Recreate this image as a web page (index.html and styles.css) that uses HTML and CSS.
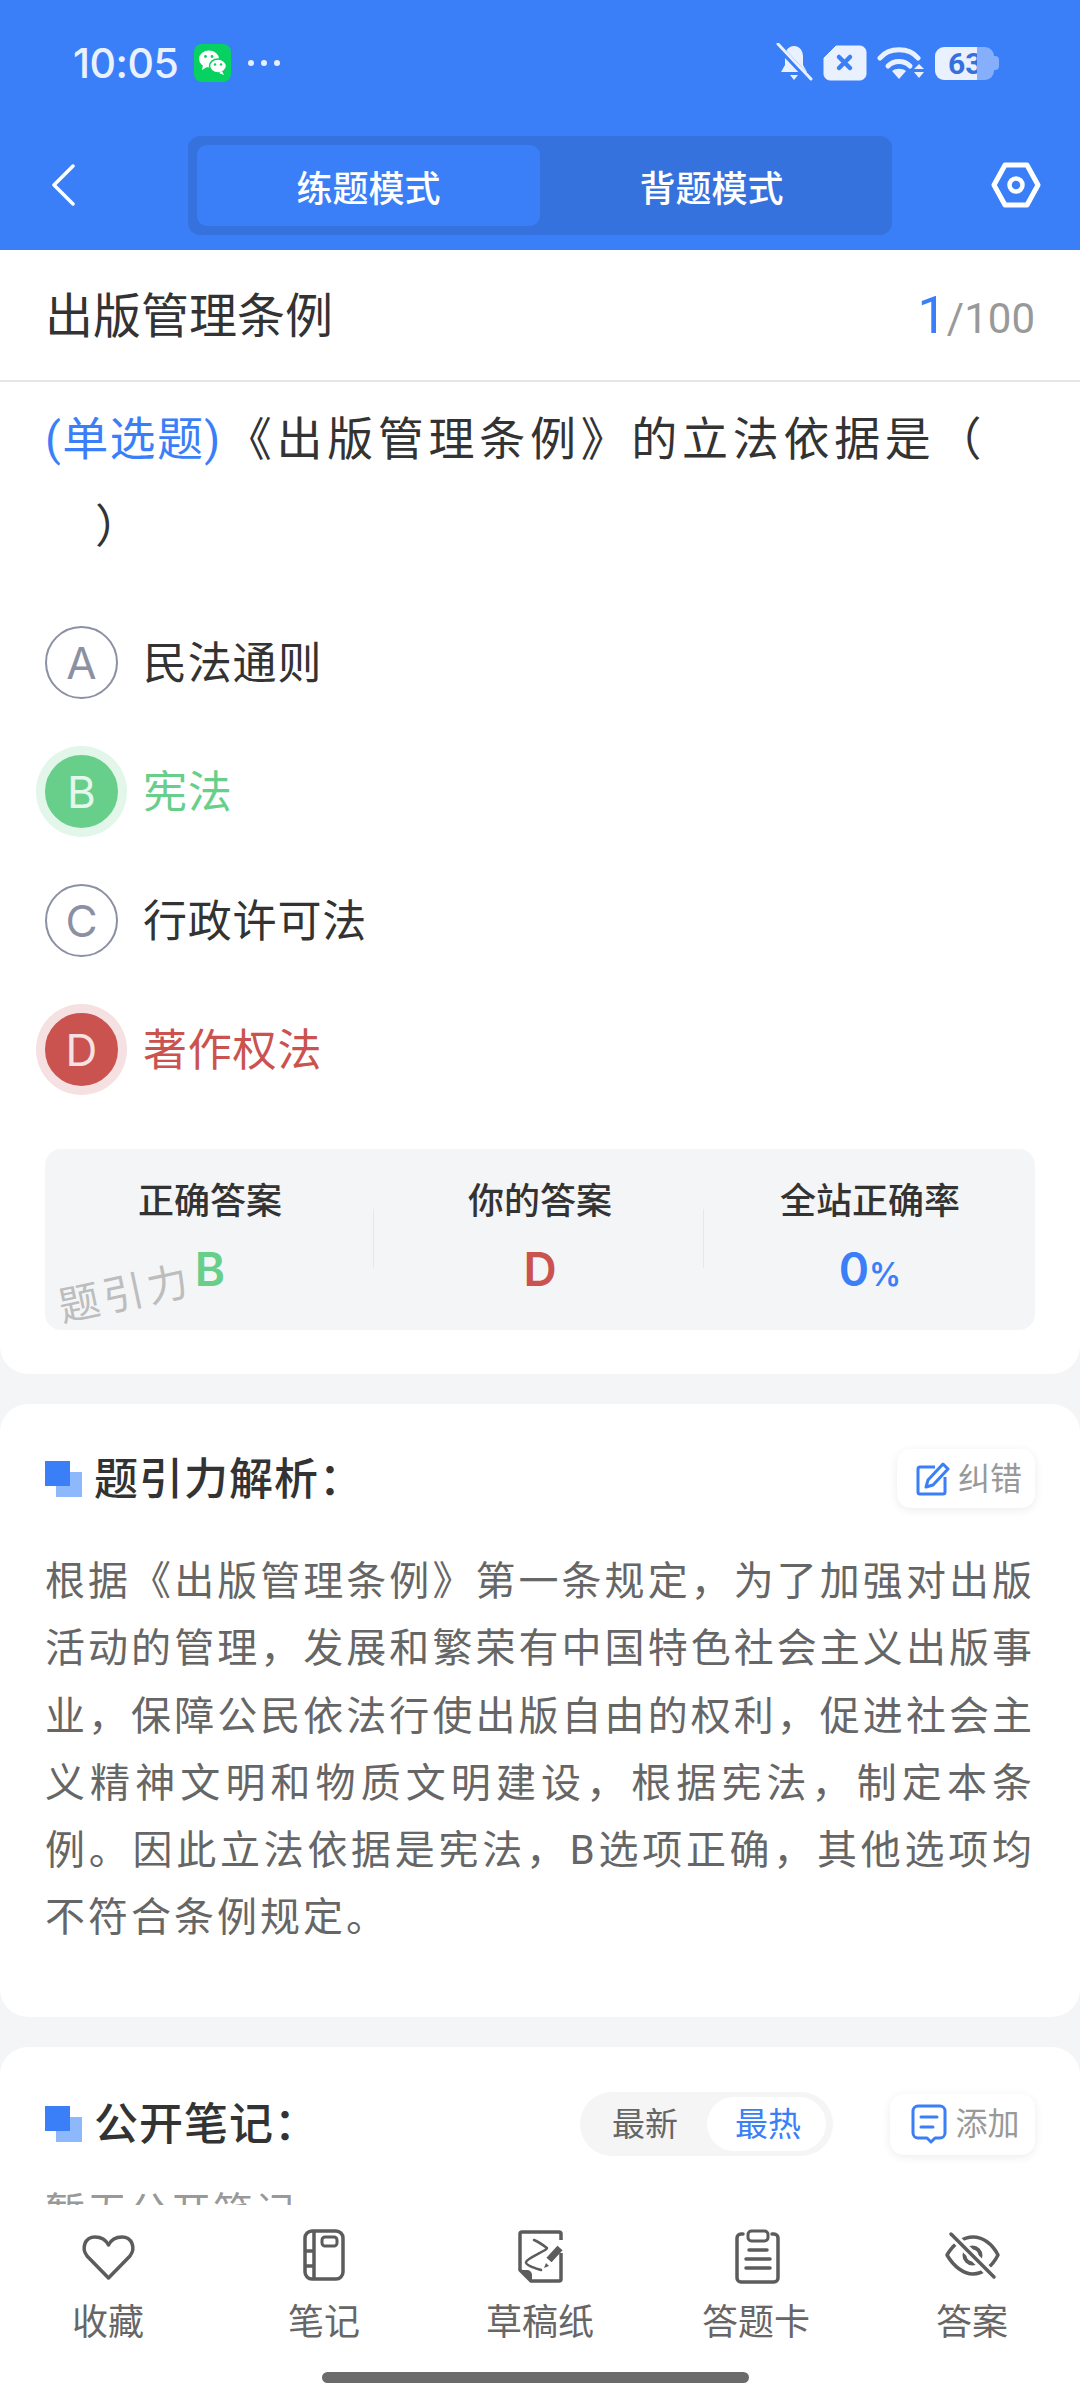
FILE: index.html
```html
<!DOCTYPE html>
<html lang="zh-CN">
<head>
<meta charset="utf-8">
<title>练题模式</title>
<link rel="stylesheet" href="styles.css">
</head>
<body>
<div class="app">
  <header class="top">
    <div class="status">
      <div class="status-left">
        <span class="time">10:05</span>
        <svg class="wx" width="37" height="38" viewBox="0 0 37 38"><rect width="37" height="38" rx="8" fill="#07D160"/><ellipse cx="15" cy="15" rx="10" ry="8.500" fill="#fff"/><path d="M9 21l-1 5 5-3z" fill="#fff"/><ellipse cx="24" cy="22" rx="8.500" ry="7" fill="#fff" stroke="#07D160" stroke-width="1.500"/><path d="M28 27l2 4-5-2z" fill="#fff"/><circle cx="11.500" cy="12.500" r="1.400" fill="#07D160"/><circle cx="18" cy="12.500" r="1.400" fill="#07D160"/><circle cx="21" cy="20.500" r="1.200" fill="#07D160"/><circle cx="27" cy="20.500" r="1.200" fill="#07D160"/></svg>
        <svg class="dots" width="34" height="8" viewBox="0 0 34 8"><circle cx="4" cy="4" r="3" fill="#E6EEFE"/><circle cx="17" cy="4" r="3" fill="#E6EEFE"/><circle cx="30" cy="4" r="3" fill="#E6EEFE"/></svg>
      </div>
      <div class="status-right">
        <svg width="37" height="40" viewBox="0 0 37 40"><path d="M18 3c6 0 9 5 9 11v8l4 7H5l4-7v-8c0-6 3-11 9-11z" fill="#EAF1FE"/><path d="M14 32h8l-4 5z" fill="#EAF1FE"/><path d="M-1 0L33 36" stroke="#3B7FF8" stroke-width="6"/><path d="M2 1L35 36" stroke="#EAF1FE" stroke-width="3" stroke-linecap="round"/></svg>
        <svg width="44" height="36" viewBox="0 0 44 36"><path d="M13 1h24a6 6 0 0 1 6 6v22a6 6 0 0 1-6 6H7a6 6 0 0 1-6-6V13z" fill="#EAF1FE" stroke="#EAF1FE" stroke-linejoin="round"/><path d="M16 12l11 11M27 12L16 23" stroke="#3B7FF8" stroke-width="4.500" stroke-linecap="round"/></svg>
        <svg width="48" height="36" viewBox="0 0 48 36"><path d="M3 13C12 2 32 2 41 13" fill="none" stroke="#EAF1FE" stroke-width="5" stroke-linecap="round"/><path d="M11 21c6-6 16-6 22 0" fill="none" stroke="#EAF1FE" stroke-width="5" stroke-linecap="round"/><path d="M15 26c4-3 10-3 14 0l-7 8z" fill="#EAF1FE"/><path d="M37 24l5-5 5 5zM37 27h10l-5 6z" fill="#EAF1FE"/></svg>
        <div class="battery"><span class="batt-fill">63</span><span class="batt-rest"></span><span class="batt-tip"></span></div>
      </div>
    </div>
    <nav class="bar">
      <svg class="back" width="26" height="42" viewBox="0 0 26 42"><path d="M23 2L4 21l19 19" fill="none" stroke="#fff" stroke-width="3.500" stroke-linecap="round" stroke-linejoin="round"/></svg>
      <div class="modes">
        <div class="mode mode-on">练题模式</div>
        <div class="mode">背题模式</div>
      </div>
      <svg class="gear" width="50" height="46" viewBox="0 0 50 46"><path d="M14 3h22l11 20-11 20H14L3 23z" fill="none" stroke="#fff" stroke-width="5" stroke-linejoin="round"/><circle cx="25" cy="23" r="6.500" fill="none" stroke="#fff" stroke-width="4.500"/></svg>
    </nav>
  </header>

  <main class="scroll">
    <section class="card card-q">
      <div class="q-head">
        <h1 class="q-title">出版管理条例</h1>
        <div class="q-count"><span class="q-now">1</span><span class="q-sep">/</span>100</div>
      </div>
      <p class="q-text"><span class="q-type">(单选题)</span>《出版管理条例》的立法依据是（<br><span class="q-close">）</span></p>
      <ul class="opts">
        <li class="opt"><span class="dot">A</span><span class="opt-text">民法通则</span></li>
        <li class="opt opt-ok"><span class="dot">B</span><span class="opt-text">宪法</span></li>
        <li class="opt"><span class="dot">C</span><span class="opt-text">行政许可法</span></li>
        <li class="opt opt-bad"><span class="dot">D</span><span class="opt-text">著作权法</span></li>
      </ul>
      <div class="stats">
        <div class="stat"><div class="stat-label">正确答案</div><div class="stat-val val-ok">B</div></div>
        <div class="stat stat-mid"><div class="stat-label">你的答案</div><div class="stat-val val-bad">D</div></div>
        <div class="stat"><div class="stat-label">全站正确率</div><div class="stat-val val-rate">0<small>%</small></div></div>
        <span class="mark">题引力</span>
      </div>
    </section>

    <section class="card card-exp">
      <div class="sec-head">
        <h2 class="sec-title"><i class="squares"></i><span class="sec-text">题引力解析：</span></h2>
        <div class="chip">
          <svg width="34" height="34" viewBox="0 0 34 34"><path d="M19 5H4a2 2 0 0 0-2 2v23a2 2 0 0 0 2 2h23a2 2 0 0 0 2-2V15" fill="none" stroke="#3B7FF8" stroke-width="3"/><path d="M27 2l5 5-15 16-7 2 2-7z" fill="none" stroke="#3B7FF8" stroke-width="3" stroke-linejoin="round"/></svg>
          <span class="chip-text">纠错</span>
        </div>
      </div>
      <p class="exp">根据《出版管理条例》第一条规定，为了加强对出版活动的管理，发展和繁荣有中国特色社会主义出版事业，保障公民依法行使出版自由的权利，促进社会主义精神文明和物质文明建设，根据宪法，制定本条例。因此立法依据是宪法，B选项正确，其他选项均不符合条例规定。</p>
    </section>

    <section class="card card-notes">
      <div class="sec-head sec-head-notes">
        <h2 class="sec-title"><i class="squares"></i><span class="sec-text">公开笔记：</span></h2>
        <div class="sec-tools">
          <div class="seg"><span class="seg-item">最新</span><span class="seg-item seg-on">最热</span></div>
          <div class="chip chip-add">
            <svg width="36" height="40" viewBox="0 0 36 40"><path d="M7 2h22a5 5 0 0 1 5 5v22a5 5 0 0 1-5 5h-5l-4 4-4-4H7a5 5 0 0 1-5-5V7a5 5 0 0 1 5-5z" fill="none" stroke="#3B7FF8" stroke-width="3" stroke-linejoin="round"/><path d="M10 13h16M10 23h12" stroke="#3B7FF8" stroke-width="3" stroke-linecap="round"/></svg>
            <span class="chip-text">添加</span>
          </div>
        </div>
      </div>
      <p class="empty">暂无公开笔记</p>
    </section>
  </main>

  <footer class="tabs">
    <div class="tab">
      <svg class="tab-ic" width="60" height="60" viewBox="0 0 60 60"><path d="M30.500 51L9 29C3 21 7 10 17 10c6 0 11 3 13.500 8C33 13 38 10 44 10c10 0 14 11 8 19z" fill="none" stroke="#5C5C5C" stroke-width="3.500" stroke-linejoin="round"/></svg>
      <span>收藏</span>
    </div>
    <div class="tab">
      <svg class="tab-ic" width="60" height="60" viewBox="0 0 60 60"><rect x="11" y="4" width="38" height="48" rx="7" fill="none" stroke="#5C5C5C" stroke-width="3.500"/><path d="M20 4v48M11 24h9M11 39h9" fill="none" stroke="#5C5C5C" stroke-width="3.500"/><rect x="28" y="10" width="15" height="9" rx="3" fill="none" stroke="#5C5C5C" stroke-width="3"/></svg>
      <span>笔记</span>
    </div>
    <div class="tab">
      <svg class="tab-ic" width="60" height="60" viewBox="0 0 60 60"><path d="M51 13V7a2 2 0 0 0-2-2H12a2 2 0 0 0-2 2v36l11 11h28a2 2 0 0 0 2-2V26" fill="none" stroke="#5C5C5C" stroke-width="3.500" stroke-linejoin="round"/><path d="M10 43h7a5 5 0 0 1 5 5v6z" fill="#5C5C5C"/><path d="M24 13c5 2 9 5 13 8 1 2-20 10-21 14-1 3 9 6 15 8" fill="none" stroke="#5C5C5C" stroke-width="2.500" stroke-linecap="round"/><path d="M50 21L39 33" stroke="#5C5C5C" stroke-width="7"/><path d="M36 36l-2 5 5-2z" fill="#5C5C5C"/></svg>
      <span>草稿纸</span>
    </div>
    <div class="tab">
      <svg class="tab-ic" width="60" height="60" viewBox="0 0 60 60"><path d="M17 7h-2a4 4 0 0 0-4 4v40a4 4 0 0 0 4 4h33a4 4 0 0 0 4-4V11a4 4 0 0 0-4-4h-2" fill="none" stroke="#5C5C5C" stroke-width="3.500" stroke-linecap="round"/><rect x="22" y="4" width="20" height="10" rx="3.500" fill="none" stroke="#5C5C5C" stroke-width="3"/><path d="M23 23h18M20 32h24M20 41h24" stroke="#5C5C5C" stroke-width="3.500" stroke-linecap="round"/></svg>
      <span>答题卡</span>
    </div>
    <div class="tab">
      <svg class="tab-ic" width="60" height="60" viewBox="0 0 60 60"><path d="M5 28C12 16 22 10 31 10s19 6 25 18c-6 12-16 19-25 19S12 40 5 28z" fill="none" stroke="#5C5C5C" stroke-width="3.500" stroke-linejoin="round"/><circle cx="30.500" cy="28.500" r="8" fill="none" stroke="#5C5C5C" stroke-width="4"/><path d="M9 7l43 43" stroke="#fff" stroke-width="9"/><path d="M9 7l43 43" stroke="#5C5C5C" stroke-width="3.500" stroke-linecap="round"/></svg>
      <span>答案</span>
    </div>
    <div class="home"></div>
  </footer>
</div>
</body>
</html>
```
FILE: styles.css
```css
* { box-sizing: border-box; margin: 0; padding: 0; }
html, body { width: 1080px; height: 2400px; overflow: hidden; }
body { font-family: Roboto, "Noto Sans CJK SC", sans-serif; background: #F4F5F7; color: #333; }
ul { list-style: none; }
.app { width: 1080px; height: 2400px; display: flex; flex-direction: column; overflow: hidden; }

.top { background: #3B7FF8; height: 250px; flex: none; }
.status { height: 126px; padding: 0 80px 0 73px; display: flex; align-items: center; justify-content: space-between; }
.status-left { display: flex; align-items: center; }
.time { font-family: Inter, Roboto, sans-serif; font-size: 41px; font-weight: 500; color: #EAF1FE; width: 121px; letter-spacing: -0.5px; }
.dots { margin-left: 16px; }
.status-right { display: flex; align-items: center; gap: 10px; }
.battery { display: flex; align-items: center; height: 33px; width: 65px; }
.batt-fill { width: 42px; height: 33px; background: #EAF1FE; border-radius: 9px 0 0 9px; color: #3470DE; font-size: 30px; font-weight: 700; line-height: 33px; padding-left: 13px; white-space: nowrap; }
.batt-rest { width: 17px; height: 33px; background: #85AFFA; border-radius: 0 9px 9px 0; }
.batt-tip { width: 5px; height: 14px; background: #85AFFA; border-radius: 0 4px 4px 0; }

.bar { display: grid; grid-template-columns: 188px 704px 188px; align-items: center; padding-top: 10px; }
.back { margin: 0 0 2px 50px; }
.gear { margin: 0 0 2px 99px; }
.modes { display: flex; height: 99px; padding: 9px; background: #3672DE; border-radius: 12px; }
.mode { flex: 1; display: flex; align-items: center; justify-content: center; color: #fff; font-size: 36px; font-weight: 500; border-radius: 10px; }
.mode-on { background: #3B7FF8; }

.scroll { flex: 1; min-height: 0; overflow: hidden; display: flex; flex-direction: column; gap: 30px; }
.card { background: #fff; border-radius: 28px; flex: none; }
.card-q { border-radius: 0 0 28px 28px; padding-bottom: 45px; height: 1124px; }

.q-head { height: 132px; padding: 0 45px; display: flex; align-items: center; justify-content: space-between; border-bottom: 2px solid #E6E6E6; }
.q-title { font-size: 48px; font-weight: 400; color: #333; padding-bottom: 6px; }
.q-count { font-size: 42px; color: #999; display: flex; align-items: baseline; }
.q-now { font-size: 52px; color: #3B7FF8; }
.q-sep { margin-left: 0; }
.q-text { font-size: 46px; line-height: 87px; letter-spacing: 4.700px; padding: 14px 45px 0; color: #333; white-space: nowrap; }
.q-type { color: #3B7FF8; letter-spacing: 1.400px; margin-right: 4px; }
.q-close { margin-left: 50px; }

.opts { margin-top: 28px; }
.opt { height: 129px; padding-left: 45px; display: flex; align-items: center; gap: 25px; font-size: 44px; letter-spacing: 0.800px; color: #333; }
.opt-text { padding-bottom: 6px; }
.dot { width: 73px; height: 73px; border-radius: 50%; border: 2px solid #8C90A3; color: #8C90A3; font-family: Inter, Roboto, sans-serif; font-size: 44px; letter-spacing: 0; display: flex; align-items: center; justify-content: center; flex: none; }
.opt-ok { color: #68CF8B; }
.opt-ok .dot { background: #68CF8B; border-color: #68CF8B; color: #E4F7EB; box-shadow: 0 0 0 9px #E2F6EA; }
.opt-bad { color: #CA534F; }
.opt-bad .dot { background: #CA534F; border-color: #CA534F; color: #F6E2E2; box-shadow: 0 0 0 9px #F5E1E1; }

.stats { position: relative; margin: 35px 45px 0; height: 181px; background: #F4F5F7; border-radius: 16px; display: grid; grid-template-columns: repeat(3, 1fr); }
.stat { display: flex; flex-direction: column; align-items: center; padding-top: 30px; }
.stat-mid { position: relative; }
.stat-mid::before, .stat-mid::after { content: ""; position: absolute; top: 60px; height: 59px; width: 1px; background: #E6E7EA; }
.stat-mid::before { left: -2px; }
.stat-mid::after { right: 1px; }
.stat-label { font-size: 36px; font-weight: 500; line-height: 46px; color: #333; }
.stat-val { font-family: Inter, Roboto, sans-serif; font-size: 46px; font-weight: 600; line-height: 56px; margin-top: 16px; }
.stat-val small { font-size: 32px; }
.val-ok { color: #68CF8B; }
.val-bad { color: #CA534F; }
.val-rate { color: #3B7FF8; }
.mark { position: absolute; left: 12px; bottom: 10px; font-size: 41px; letter-spacing: 4px; color: #BDBDBD; transform: rotate(-12deg); }

.card-exp { height: 613px; padding: 45px 45px 0; }
.sec-head { display: flex; align-items: center; justify-content: space-between; height: 59px; }
.sec-head-notes { height: 62px; }
.sec-title { display: flex; align-items: center; font-size: 44px; font-weight: 500; color: #333; letter-spacing: 1px; }
.sec-text { padding-bottom: 6px; }
.squares { position: relative; display: block; width: 37px; height: 36px; margin-right: 12px; }
.squares::before { content: ""; position: absolute; left: 11px; top: 11px; width: 26px; height: 25px; background: #8DB8FC; }
.squares::after { content: ""; position: absolute; left: 0; top: 0; width: 25px; height: 25px; background: #3B7FF8; }
.chip { display: flex; align-items: center; justify-content: center; gap: 8px; width: 138px; height: 59px; padding-left: 6px; background: #fff; border-radius: 14px; box-shadow: 0 2px 10px rgba(0,0,0,.08); color: #999; font-size: 32px; }
.chip-add { width: 145px; height: 61px; }
.chip-text { padding-bottom: 6px; }
.exp { margin-top: 40px; font-size: 40px; line-height: 67.300px; letter-spacing: 3px; color: #666; text-align: justify; }

.card-notes { padding: 46px 45px 0; height: 220px; }
.sec-tools { display: flex; align-items: center; gap: 57px; }
.seg { display: flex; width: 253px; height: 64px; padding: 5px 7px 5px 0; background: #F5F5F5; border-radius: 32px; }
.seg-item { flex: 1; display: flex; align-items: center; justify-content: center; font-size: 33px; color: #666; border-radius: 27px; padding: 0 0 4px 3px; }
.seg-on { flex: none; width: 119px; background: #fff; color: #3B7FF8; }
.empty { margin-top: 25px; font-size: 40px; letter-spacing: 2px; color: #999; }

.tabs { position: relative; flex: none; height: 195px; background: #fff; display: grid; grid-template-columns: repeat(5, 216px); align-content: start; padding-top: 22px; }
.tab { display: flex; flex-direction: column; align-items: center; color: #666; font-size: 36px; line-height: 48px; gap: 12px; }
.tab-ic { display: block; }
.home { position: absolute; left: 322px; top: 167px; width: 427px; height: 11px; border-radius: 6px; background: #6B6B6B; }
```
